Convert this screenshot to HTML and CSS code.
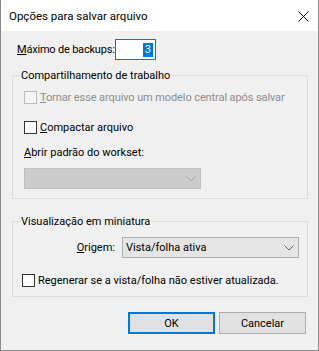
FILE: index.html
```html
<!DOCTYPE html>
<html lang="pt">
<head>
    <meta charset="UTF-8">
    <title>Opções para salvar arquivo</title>
    <link rel="stylesheet" href="styles.css">
</head>
<body>
    <div class="window">
        <div class="titlebar">
            <span class="title">Opções para salvar arquivo</span>
            <svg class="close" width="11" height="11" viewBox="0 0 11 11">
                <path d="M0.5 0.5 L10.5 10.5 M10.5 0.5 L0.5 10.5" stroke="#000" stroke-width="1" fill="none"/>
            </svg>
        </div>

        <div class="content">
            <div class="backups-row">
                <label class="backups-label"><u>M</u>áximo de backups:</label>
                <div class="spin"><span class="sel">3</span></div>
            </div>

            <fieldset class="group group-work">
                <legend>Compartilhamento de trabalho</legend>
                <div class="check disabled">
                    <span class="box"></span>
                    <span><u>T</u>ornar esse arquivo um modelo central após salvar</span>
                </div>
                <div class="check check-compact">
                    <span class="box"></span>
                    <span><u>C</u>ompactar arquivo</span>
                </div>
                <div class="field-label"><u>A</u>brir padrão do workset:</div>
                <div class="combo combo-workset disabled">
                    <span class="combo-text"></span>
                    <svg class="chevron" width="10" height="6" viewBox="0 0 10 6">
                        <path d="M0.5 0.5 L5 5 L9.5 0.5" stroke="#a6a6a6" fill="none"/>
                    </svg>
                </div>
            </fieldset>

            <fieldset class="group group-thumb">
                <legend>Visualização em miniatura</legend>
                <div class="origin-row">
                    <span class="origin-label"><u>O</u>rigem:</span>
                    <div class="combo combo-origin">
                        <span class="combo-text">Vista/folha ativa</span>
                        <svg class="chevron" width="10" height="6" viewBox="0 0 10 6">
                            <path d="M0.5 0.5 L5 5 L9.5 0.5" stroke="#606060" fill="none"/>
                        </svg>
                    </div>
                </div>
                <div class="check check-regen">
                    <span class="box"></span>
                    <span>Regenerar se a vista/folha não estiver atualizada.</span>
                </div>
            </fieldset>

            <div class="buttons">
                <button class="btn btn-default">OK</button>
                <button class="btn">Cancelar</button>
            </div>
        </div>
    </div>
</body>
</html>
```

FILE: styles.css
```css
body {
    margin: 0;
    font-family: Roboto, "Liberation Sans", sans-serif;
    font-size: 11px;
    line-height: 15px;
    color: #000;
    white-space: nowrap;
}

.window {
    width: 319px;
    height: 351px;
    box-sizing: border-box;
    border: 1px solid #8a8a8a;
    border-top: 0;
    background-color: #f0f0f0;
    display: flex;
    flex-direction: column;
}

.titlebar {
    height: 31px;
    background-color: #fff;
    display: flex;
    align-items: flex-start;
    justify-content: space-between;
    padding-left: 8px;
}

.title {
    margin-top: 9px;
    font-size: 11.5px;
}

.close {
    margin-top: 11px;
    margin-right: 9px;
}

.content {
    padding: 8px 10px 0 11px;
}

.backups-row {
    display: flex;
    align-items: center;
    height: 21px;
}

.backups-label {
    width: 103px;
    padding-left: 5px;
    box-sizing: border-box;
    letter-spacing: -0.2px;
}

.spin {
    width: 41px;
    height: 21px;
    box-sizing: border-box;
    border: 1px solid #0078d7;
    background-color: #fff;
    display: flex;
    align-items: center;
    justify-content: flex-end;
    padding-right: 2px;
}

.sel {
    background-color: #0078d7;
    color: #fff;
    padding: 0 2px;
    line-height: 14px;
}

.group {
    margin: 0;
    padding: 0 0 9px 11px;
    border: 1px solid #dcdcdc;
}

.group legend {
    margin-left: -4px;
    padding: 0 1px;
    line-height: 15px;
}

.group-work {
    margin-top: 8px;
}

.group-thumb {
    margin-top: 15px;
    padding-left: 9px;
    padding-bottom: 8px;
}

.group-thumb legend {
    margin-left: -2px;
}

.check {
    display: flex;
    align-items: center;
    height: 15px;
}

.check .box {
    width: 13px;
    height: 13px;
    box-sizing: border-box;
    border: 1px solid #333;
    background-color: #fff;
    margin-right: 3px;
}

.check.disabled {
    color: #8c8c8c;
    margin-top: 7px;
    letter-spacing: -0.1px;
}

.check.disabled .box {
    border-color: #bcbcbc;
    background-color: #f4f4f4;
}

.check-compact {
    margin-top: 15px;
}

.field-label {
    margin-top: 10px;
}

.combo {
    height: 21px;
    box-sizing: border-box;
    border: 1px solid #adadad;
    background-color: #e5e5e5;
    display: flex;
    align-items: center;
    justify-content: space-between;
    padding: 0 4px 0 3px;
}

.combo.disabled {
    background-color: #cccccc;
    border-color: #bfbfbf;
}

.combo-workset {
    width: 177px;
    margin-top: 8px;
}

.origin-row {
    display: flex;
    align-items: center;
    margin-top: 8px;
}

.origin-label {
    width: 100px;
    padding-right: 7px;
    box-sizing: border-box;
    text-align: right;
}

.combo-origin {
    width: 177px;
}

.check-regen {
    margin-top: 15px;
}

.buttons {
    display: flex;
    justify-content: flex-end;
    gap: 4px;
    margin-top: 15px;
    padding-right: 2px;
}

.btn {
    width: 87px;
    height: 22px;
    box-sizing: border-box;
    border: 1px solid #adadad;
    background-color: #e1e1e1;
    font-family: inherit;
    font-size: 11px;
    color: #000;
    padding: 0;
}

.btn-default {
    border: 2px solid #0078d7;
}
```
